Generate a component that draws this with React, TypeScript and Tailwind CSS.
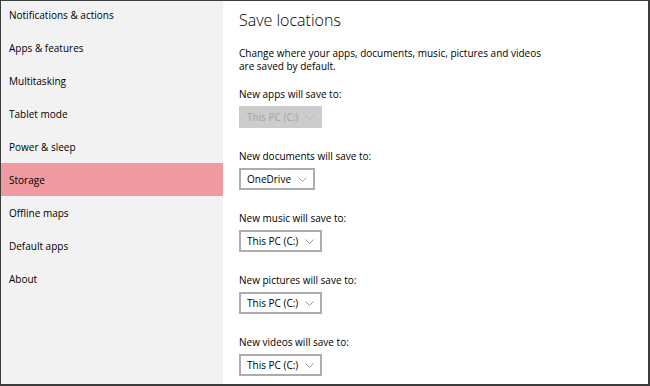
const navItems = [
  "Notifications & actions",
  "Apps & features",
  "Multitasking",
  "Tablet mode",
  "Power & sleep",
  "Storage",
  "Offline maps",
  "Default apps",
  "About",
];

const saveTargets = [
  { label: "New apps will save to:", value: "This PC (C:)", disabled: true },
  { label: "New documents will save to:", value: "OneDrive", disabled: false },
  { label: "New music will save to:", value: "This PC (C:)", disabled: false },
  { label: "New pictures will save to:", value: "This PC (C:)", disabled: false },
  { label: "New videos will save to:", value: "This PC (C:)", disabled: false },
];

function Dropdown({ value, disabled }: { value: string; disabled: boolean }) {
  return (
    <div
      className={
        disabled
          ? "flex h-[22px] w-fit items-center gap-[7px] border-2 border-[#cccccc] bg-[#cccccc] pl-[6px] pr-[6px] text-[10px] text-[#a3a3a3]"
          : "flex h-[22px] w-fit items-center gap-[7px] border-2 border-[#adadad] bg-white pl-[6px] pr-[6px] text-[10px] text-black"
      }
    >
      <span>{value}</span>
      <svg width="9" height="5" viewBox="0 0 9 5" fill="none">
        <path d="M0.5 0.5 L4.5 4.5 L8.5 0.5" stroke={disabled ? "#b5b5b5" : "#9a9a9a"} strokeWidth="1" />
      </svg>
    </div>
  );
}

export default function App() {
  return (
    <div
      className="flex h-[386px] w-[650px] overflow-hidden border-t border-l border-r-2 border-b-2 border-[#3c3c3c] bg-white"
      style={{ fontFamily: '"Open Sans", "Noto Sans", sans-serif' }}
    >
      <div className="flex w-[222px] shrink-0 flex-col bg-[#f2f2f2]">
        <div className="-mt-[3px] flex flex-col">
          {navItems.map((item) => (
            <div
              key={item}
              className={
                item === "Storage"
                  ? "flex h-[33px] items-center bg-[#ef9aa1] pl-[8px] pt-[1px] text-[10px] text-black"
                  : "flex h-[33px] items-center pl-[8px] pt-[1px] text-[10px] text-black"
              }
            >
              {item}
            </div>
          ))}
        </div>
      </div>
      <div className="flex flex-1 flex-col pl-[16px] pt-[7px]">
        <h1 className="text-[16px] font-light leading-[24px] text-black">Save locations</h1>
        <p className="mt-[15px] w-[305px] text-[10px] leading-[13px] text-black">
          Change where your apps, documents, music, pictures and videos are saved by default.
        </p>
        <div className="mt-[13px] flex flex-col gap-[20px]">
          {saveTargets.map((t) => (
            <div key={t.label} className="flex flex-col gap-[4px]">
              <div className="text-[10px] leading-[16px] text-black">{t.label}</div>
              <Dropdown value={t.value} disabled={t.disabled} />
            </div>
          ))}
        </div>
      </div>
    </div>
  );
}
